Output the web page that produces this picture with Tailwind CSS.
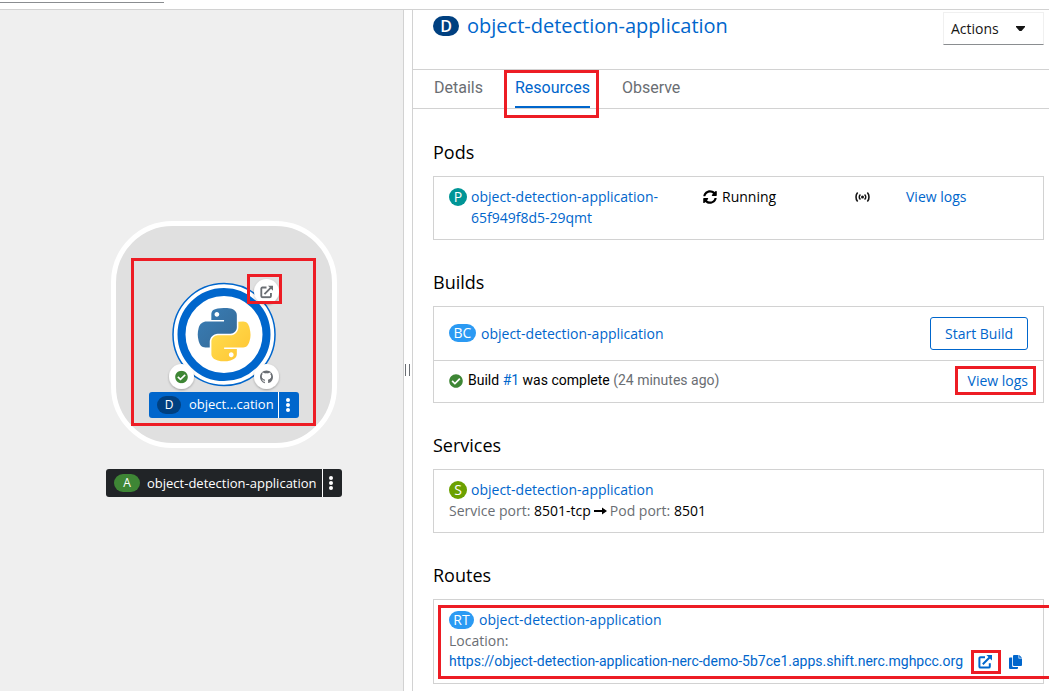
<!DOCTYPE html>
<html lang="en">
<head>
<meta charset="utf-8">
<title>Topology</title>
<script src="https://cdn.jsdelivr.net/npm/@tailwindcss/browser@4"></script>
</head>
<body class="flex h-screen flex-col overflow-hidden bg-white font-['Open_Sans','Noto_Sans',sans-serif] text-sm leading-[21px] text-black">
<svg class="hidden" aria-hidden="true">
  <symbol id="ext" viewBox="0 0 14 14"><path d="M7 2.200H2.600a1.200 1.200 0 0 0-1.200 1.200v8a1.200 1.200 0 0 0 1.200 1.200h8a1.200 1.200 0 0 0 1.200-1.200V8.200M4.800 9.200 11.500 2.500" fill="none" stroke="currentColor" stroke-width="2"/><path d="M8.400 0H14v5.600z" fill="currentColor"/></symbol>
  <symbol id="check" viewBox="0 0 512 512"><path fill="currentColor" d="M504 256c0 136.967-111.033 248-248 248S8 392.967 8 256 119.033 8 256 8s248 111.033 248 248zM227.314 387.314l184-184c6.248-6.248 6.248-16.379 0-22.627l-22.627-22.627c-6.248-6.249-16.379-6.249-22.628 0L216 308.118l-70.059-70.059c-6.248-6.248-16.379-6.248-22.628 0l-22.627 22.627c-6.248 6.248-6.248 16.379 0 22.627l104 104c6.249 6.249 16.379 6.249 22.628.001z"/></symbol>
</svg>

<header class="h-[10px] shrink-0 border-b border-[#d2d2d2]"><div class="h-[3px] w-[164px] border-b border-[#8a8d90]"></div></header>

<main class="flex min-h-0 flex-1">
  <!-- Topology canvas -->
  <section aria-label="Topology" class="relative w-[404px] shrink-0 overflow-hidden border-r border-[#d2d2d2] bg-[#efefef]">
    <svg class="absolute left-0 top-0" width="403" height="520" viewBox="0 10 403 520">
      <defs>
        <filter id="sh" x="-30%" y="-30%" width="160%" height="160%"><feDropShadow dx="0" dy="1" stdDeviation="1" flood-color="#000" flood-opacity=".3"/></filter>
        <linearGradient id="pb" x1="0" y1="0" x2="1" y2="1"><stop offset="0" stop-color="#387eb8"/><stop offset="1" stop-color="#366994"/></linearGradient>
        <linearGradient id="py" x1="0" y1="0" x2="1" y2="1"><stop offset="0" stop-color="#ffe052"/><stop offset="1" stop-color="#ffc331"/></linearGradient>
      </defs>
      <rect x="113.500" y="223.500" width="221" height="222" rx="59" fill="#e0e0e0" stroke="#fff" stroke-width="5"/>
      <circle cx="224" cy="334.500" r="51" fill="#fff" stroke="#06c" stroke-width="1.500"/>
      <circle cx="224" cy="334.500" r="42.500" fill="#fff" stroke="#06c" stroke-width="8"/>
      <g transform="translate(197.700 308) scale(.475)">
        <path fill="url(#pb)" d="M54.900 0c-4.600 0-9 .4-12.800 1.100C30.800 3.100 28.700 7.300 28.700 15v10.200h26.800v3.400H18.700c-7.800 0-14.600 4.700-16.700 13.600-2.500 10.200-2.600 16.600 0 27.300 1.900 7.900 6.500 13.600 14.200 13.600h9.200V70.900c0-8.900 7.700-16.700 16.800-16.700H69c7.400 0 13.400-6.100 13.400-13.600V15c0-7.300-6.100-12.700-13.400-13.900C64.300.3 59.500 0 54.900 0zM40.400 8.200c2.800 0 5 2.300 5 5.100s-2.200 5.100-5 5.100-5-2.300-5-5.100 2.200-5.100 5-5.100z"/>
        <path fill="url(#py)" d="M85.600 28.700v11.900c0 9.200-7.800 17-16.700 17H42.200c-7.300 0-13.400 6.300-13.400 13.600v25.500c0 7.300 6.300 11.500 13.400 13.600 8.500 2.500 16.600 2.900 26.800 0 6.700-2 13.400-5.900 13.400-13.600V86.500H55.600v-3.400h40.200c7.800 0 10.700-5.400 13.400-13.600 2.800-8.400 2.700-16.500 0-27.300-1.900-7.800-5.600-13.600-13.400-13.600zM70.600 93.300c2.800 0 5 2.300 5 5.100s-2.200 5.100-5 5.100-5-2.300-5-5.100 2.200-5.100 5-5.100z"/>
      </g>
      <g fill="#fff" filter="url(#sh)"><circle cx="266.500" cy="291.500" r="12.500"/><circle cx="181.500" cy="376.500" r="12.500"/><circle cx="266.500" cy="376.500" r="12.500"/></g>
      <use href="#ext" x="260" y="285.500" width="13" height="13" color="#6a6e73"/>
      <use href="#check" x="175" y="370.500" width="13" height="13" color="#3e8635"/>
      <path transform="translate(260 370.500) scale(.8125)" fill="#6a6e73" d="M8 0C3.580 0 0 3.580 0 8c0 3.540 2.290 6.530 5.470 7.590.4.070.55-.17.55-.38v-1.490c-2.230.48-2.700-1.070-2.700-1.070-.36-.92-.89-1.170-.89-1.170-.73-.5.060-.49.060-.49.800.060 1.230.83 1.230.83.710 1.220 1.870.87 2.330.66.070-.52.280-.87.510-1.070-1.780-.2-3.640-.89-3.640-3.950 0-.87.310-1.590.82-2.150-.08-.2-.36-1.020.08-2.120 0 0 .67-.21 2.200.82a7.600 7.600 0 0 1 4 0c1.530-1.040 2.200-.82 2.200-.82.440 1.100.16 1.920.08 2.120.51.560.82 1.270.82 2.150 0 3.070-1.870 3.750-3.650 3.950.29.250.54.730.54 1.480v2.200c0 .21.150.46.550.38A8 8 0 0 0 16 8c0-4.420-3.580-8-8-8z"/>
      <path fill="#fff" d="M265 373.600h3c2.300 0 3.200.9 3.200 2.700 0 2.300-1.600 3-4.700 3s-4.700-.7-4.700-3c0-1.800.9-2.700 3.200-2.700zM262.400 372.400c.9 0 1.600.5 2.200 1.200l-2.200 1.200zM270.600 372.400c-.9 0-1.600.5-2.200 1.200l2.200 1.200zM265 379h3v5h-3z"/>
    </svg>
    <div class="absolute left-[149px] top-[382px] flex h-[26px] w-[150px] items-stretch overflow-hidden rounded-[3px] bg-[#0066cc] text-[13px] text-white">
      <div class="flex flex-1 items-center gap-2 pb-px pl-2"><span class="flex h-[18px] w-6 items-center justify-center rounded-full bg-[#004080] text-xs">D</span><span>object...cation</span></div>
      <button aria-label="Node actions" class="flex w-[21px] items-center justify-center border-l border-white pr-[3px]"><svg width="4" height="14" viewBox="0 0 4 14" fill="#fff"><circle cx="2" cy="2" r="2"/><circle cx="2" cy="7" r="2"/><circle cx="2" cy="12" r="2"/></svg></button>
    </div>
    <div class="absolute left-[106px] top-[459px] flex h-7 w-[236px] items-stretch overflow-hidden rounded-[3px] bg-[#212427] text-[13px] text-white">
      <div class="flex flex-1 items-center gap-[7px] pl-2"><span class="flex h-[18px] w-[26px] items-center justify-center rounded-full bg-[#3e8635] text-xs">A</span><span>object-detection-application</span></div>
      <button aria-label="Application actions" class="flex w-5 items-center justify-center border-l border-white pr-[3px]"><svg width="4" height="14" viewBox="0 0 4 14" fill="#fff"><circle cx="2" cy="2" r="2"/><circle cx="2" cy="7" r="2"/><circle cx="2" cy="12" r="2"/></svg></button>
    </div>
    <div class="absolute left-[131px] top-[248px] h-[168px] w-[185px] border-3 border-[#ed1c24]"></div>
    <div class="absolute left-[247px] top-[264px] h-[30px] w-[35px] border-3 border-[#ed1c24]"></div>
  </section>

  <div role="separator" aria-orientation="vertical" class="flex w-[9px] shrink-0 items-center border-r border-[#d2d2d2] pl-px">
    <div class="mt-[38px] h-3 w-[5px] border-x border-[#6a6e73]"></div>
  </div>

  <!-- Side panel -->
  <aside class="min-w-0 flex-1 overflow-hidden">
    <div class="flex h-[60px] items-start justify-between border-b border-[#d2d2d2] pl-5 pr-[5px] pt-[2px]">
      <h1 class="flex items-center gap-2 text-xl leading-7"><span class="flex h-5 w-[26px] items-center justify-center rounded-full bg-[#004080] text-base font-semibold leading-5 text-white">D</span><a href="#" class="text-[#0066cc]">object-detection-application</a></h1>
      <button class="flex h-[33px] w-[101px] items-center justify-between border border-[#f0f0f0] border-b-[#8a8d90] pl-[7px] pr-[18px] text-[#151515]">Actions<svg width="9" height="5" viewBox="0 0 9 5"><path d="M0 0h9v1L5.500 5h-2L0 1z" fill="#151515"/></svg></button>
    </div>
    <nav class="flex h-[39px] border-b border-[#d2d2d2] pl-[5px] font-[Roboto,sans-serif] text-base leading-9 text-[#6a6e73]">
      <a href="#" class="px-4">Details</a>
      <a href="#" class="relative px-4 text-[#0066cc]">Resources<span class="absolute inset-x-4 bottom-0 h-[2px] bg-[#0066cc]"></span><span class="absolute -bottom-[10px] left-[5px] right-[7px] top-0 border-3 border-[#ed1c24]"></span></a>
      <a href="#" class="px-4">Observe</a>
    </nav>

    <div class="pl-5 pr-[5px] pt-px">
      <h2 class="pb-[13px] pt-[31px] text-lg font-medium leading-[22px]">Pods</h2>
      <div class="grid grid-cols-[254fr_152fr_51fr_122fr] border border-[#d2d2d2] px-[15px] pb-[11px] pt-[9px]">
        <div class="flex items-start gap-1"><span class="mt-[2px] flex size-[18px] shrink-0 items-center justify-center rounded-full bg-[#009596] leading-[18px] text-white">P</span><a href="#" class="text-[#0066cc]">object-detection-application-<br>65f949f8d5-29qmt</a></div>
        <div class="flex h-[21px] items-center gap-[5px]"><svg width="14" height="14" viewBox="0 0 512 512"><path d="M370.720 133.280C339.458 104.008 298.888 87.962 255.848 88c-77.458.068-144.328 53.178-162.791 126.850-1.344 5.363-6.122 9.150-11.651 9.150H24.103c-7.498 0-13.194-6.807-11.807-14.176C33.933 94.924 134.813 8 256 8c66.448 0 126.791 26.136 171.315 68.685L463.030 40.970C478.149 25.851 504 36.559 504 57.941V192c0 13.255-10.745 24-24 24H345.941c-21.382 0-32.090-25.851-16.971-40.971l41.750-41.749zM32 296h134.059c21.382 0 32.090 25.851 16.971 40.971l-41.750 41.750c31.262 29.273 71.835 45.319 114.876 45.280 77.418-.070 144.315-53.144 162.787-126.849 1.344-5.363 6.122-9.150 11.651-9.150h57.304c7.498 0 13.194 6.807 11.807 14.176C478.067 417.076 377.187 504 256 504c-66.448 0-126.791-26.136-171.315-68.685L48.970 471.030C33.851 486.149 8 475.441 8 454.059V320c0-13.255 10.745-24 24-24z"/></svg>Running</div>
        <div class="flex h-[21px] items-center"><svg width="15" height="10" viewBox="0 0 15 10" fill="none" stroke="#151515" stroke-width="1.600" stroke-linecap="round"><circle cx="7.500" cy="5" r="1.500" fill="#151515" stroke="none"/><path d="M2.300 1C.6 3 .6 7 2.300 9M12.700 1c1.700 2 1.700 6 0 8M5 3c-.9 1-.9 3 0 4M10 3c.9 1 .9 3 0 4"/></svg></div>
        <a href="#" class="text-[#0066cc]">View logs</a>
      </div>

      <h2 class="pb-[13px] pt-[31px] text-lg font-medium leading-[22px]">Builds</h2>
      <div class="border border-[#d2d2d2]">
        <div class="flex items-center justify-between px-[15px] py-[10px]">
          <div class="flex items-center gap-[5px] pb-px"><span class="flex h-[18px] w-[27px] items-center justify-center rounded-full bg-[#2b9af3] leading-[18px] text-white">BC</span><a href="#" class="text-[#0066cc]">object-detection-application</a></div>
          <button class="h-[33px] w-[98px] rounded-[3px] border border-[#0066cc] pb-px text-[#0066cc]">Start Build</button>
        </div>
        <div class="flex items-center justify-between border-t border-[#d2d2d2] px-[15px] pb-[11px] pt-[9px]">
          <div class="flex items-center gap-[5px] font-[Roboto,sans-serif]"><svg width="14" height="14" class="text-[#3e8635]"><use href="#check"/></svg><span>Build <a href="#" class="text-[#0066cc]">#1</a> was complete <span class="text-[#6a6e73]">(24 minutes ago)</span></span></div>
          <a href="#" class="relative text-[#0066cc]">View logs<span class="absolute -left-[13px] -right-2 -top-1 h-[29px] border-3 border-[#ed1c24]"></span></a>
        </div>
      </div>

      <h2 class="pb-[13px] pt-[31px] text-lg font-medium leading-[22px]">Services</h2>
      <div class="border border-[#d2d2d2] px-[15px] pb-[11px] pt-[9px]">
        <div class="flex items-center gap-1"><span class="flex size-[18px] items-center justify-center rounded-full bg-[#6ca100] leading-[18px] text-white">S</span><a href="#" class="text-[#0066cc]">object-detection-application</a></div>
        <div class="flex items-center gap-[3px]"><span><span class="text-[#6a6e73]">Service port:</span> 8501-tcp</span><svg width="13" height="8" viewBox="0 0 13 8"><path d="M0 3h8V.500L13 4 8 7.500V5H0z"/></svg><span><span class="text-[#6a6e73]">Pod port:</span> 8501</span></div>
      </div>

      <h2 class="pb-[13px] pt-[31px] text-lg font-medium leading-[22px]">Routes</h2>
      <div class="relative border border-[#d2d2d2] px-[15px] pb-[11px] pt-[9px]">
        <div class="flex items-center gap-[5px]"><span class="flex h-[18px] w-[25px] items-center justify-center rounded-full bg-[#2b9af3] leading-[18px] text-white">RT</span><a href="#" class="text-[#0066cc]">object-detection-application</a></div>
        <div class="text-[#6a6e73]">Location:</div>
        <div class="flex items-center whitespace-nowrap text-[#0066cc]">
          <a href="#" class="flex items-center font-[Roboto,sans-serif]">https://object-detection-application-nerc-demo-5b7ce1.apps.shift.nerc.mghpcc.org<span class="relative ml-[15px]"><svg width="14" height="14"><use href="#ext"/></svg><span class="absolute -bottom-[5px] -left-[7px] -right-[9px] -top-[5px] border-3 border-[#ed1c24]"></span></span></a>
          <button aria-label="Copy" class="ml-[17px]"><svg width="13" height="14" viewBox="0 0 13 14" fill="#06c"><path d="M5 0h4.500v3.500H13V10a1 1 0 0 1-1 1H5a1 1 0 0 1-1-1V1a1 1 0 0 1 1-1zM10.200 0 13 2.800h-2.800zM1 2.500h2.200V11a1 1 0 0 0 1 1H9v1a1 1 0 0 1-1 1H1a1 1 0 0 1-1-1V3.500a1 1 0 0 1 1-1z"/></svg></button>
        </div>
        <div class="pointer-events-none absolute -right-10 bottom-1 left-1 top-[5px] border-3 border-[#ed1c24]"></div>
      </div>
    </div>
  </aside>
</main>
</body>
</html>
